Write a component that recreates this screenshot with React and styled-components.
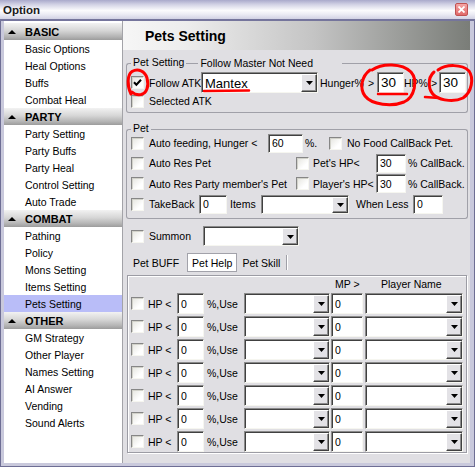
import React from "react";
import styled, { createGlobalStyle, css } from "styled-components";

const GlobalStyle = createGlobalStyle`
  * { box-sizing: border-box; }
  html, body { margin: 0; padding: 0; background: #e0dfe3; }
  body {
    font-family: "Liberation Sans", Arial, sans-serif;
    font-size: 10.5px;
    color: #000;
  }
`;

const sections = [
  { title: "BASIC", items: ["Basic Options", "Heal Options", "Buffs", "Combat Heal"] },
  { title: "PARTY", items: ["Party Setting", "Party Buffs", "Party Heal", "Control Setting", "Auto Trade"] },
  { title: "COMBAT", items: ["Pathing", "Policy", "Mons Setting", "Items Setting", "Pets Setting"] },
  { title: "OTHER", items: ["GM Strategy", "Other Player", "Names Setting", "AI Answer", "Vending", "Sound Alerts"] },
];

const Window = styled.div`
  position: relative;
  width: 475px;
  height: 467px;
  display: flex;
  flex-direction: column;
  overflow: hidden;
`;

const TitleBar = styled.div`
  height: 21px;
  flex: none;
  display: flex;
  align-items: center;
  justify-content: space-between;
  padding: 0 7px 0 3px;
  border-bottom: 2px solid #75759c;
  background: linear-gradient(to bottom, #a9a9cb 0%, #d4d4e6 25%, #fbfbfd 55%, #ececf4 75%, #d2d2e4 100%);
  font-size: 11.5px;
  font-weight: bold;
  color: #1a1a1a;
`;

const CloseBtn = styled.span`
  width: 13px;
  height: 13px;
  display: flex;
  align-items: center;
  justify-content: center;
  background: linear-gradient(#f5a4a4, #e06a6a);
  border: 1px solid #c05252;
  border-radius: 2px;
`;

const Frame = styled.div`
  flex: 1;
  min-height: 0;
  display: flex;
  padding: 0 4px 3px 3px;
  background: #c9c9dc;
  border: 1px solid #6e6e94;
  border-top: none;
`;

const Sidebar = styled.div`
  width: 119px;
  flex: none;
  background: #fff;
  border-right: 1px solid #a3a3a8;
  padding-top: 2px;
`;

const SectionHead = styled.div`
  height: 17px;
  display: flex;
  align-items: center;
  padding-left: 4px;
  font-size: 11px;
  font-weight: bold;
  background: linear-gradient(to bottom, #f2f2f2 0%, #d6d6d6 45%, #b4b4b4 80%, #9c9c9c 100%);
`;

const Arrow = styled.span`
  width: 0;
  height: 0;
  border-left: 4px solid transparent;
  border-right: 4px solid transparent;
  border-bottom: 4px solid #000;
  margin-right: 9px;
`;

const NavItem = styled.div`
  height: 17px;
  display: flex;
  align-items: center;
  padding-left: 21px;
  background: ${(p) => (p.$active ? "#b9bdf8" : "transparent")};
`;

const Main = styled.div`
  flex: 1;
  display: flex;
  flex-direction: column;
  background: #e0dfe3;
`;

const PageHeader = styled.div`
  height: 29px;
  flex: none;
  display: flex;
  align-items: center;
  padding-left: 22px;
  font-size: 14px;
  font-weight: bold;
  background: linear-gradient(to right, #f6f6f6 0%, #ededed 18%, #c4c4c4 55%, #7a7d78 100%);
`;

const Content = styled.div`
  padding: 0 2px 0 3px;
`;

const lineColor = "#a0a0a8";

const Group = styled.div`
  margin-top: ${(p) => p.$mt}px;
`;

const GroupHead = styled.div`
  display: flex;
  height: 10px;
`;

const Caption = styled.span`
  flex: none;
  line-height: 10px;
  padding: 0 2px;
  white-space: nowrap;
  margin-right: ${(p) => p.$mr || 0}px;
  position: relative;
  top: ${(p) => p.$dy || 0}px;
`;

const Edge = styled.span`
  align-self: flex-end;
  height: 4px;
  border-top: 1px solid ${lineColor};
  ${(p) => (p.$w ? css`width: ${p.$w}px; flex: none;` : css`flex: 1;`)}
  ${(p) => p.$left && css`border-left: 1px solid ${lineColor}; border-top-left-radius: 3px;`}
  ${(p) => p.$right && css`border-right: 1px solid ${lineColor}; border-top-right-radius: 3px;`}
`;

const GroupBody = styled.div`
  border: 1px solid ${lineColor};
  border-top: none;
  border-radius: 0 0 3px 3px;
  padding: ${(p) => p.$pad};
`;

const Row = styled.div`
  display: flex;
  align-items: center;
  height: ${(p) => p.$h}px;
  margin-top: ${(p) => p.$mt || 0}px;
  flex: none;
`;

const Txt = styled.span`
  flex: none;
  white-space: nowrap;
  margin-left: ${(p) => p.$ml || 0}px;
  ${(p) => p.$w && css`width: ${p.$w}px;`}
`;

const sunken = css`
  background: #fff;
  border: 1px solid;
  border-color: #8a8a8a #f6f6f0 #f6f6f0 #8a8a8a;
  box-shadow: inset 1px 1px 0 #404040;
`;

const CheckBox = styled.span`
  flex: none;
  width: 13px;
  height: 13px;
  margin-left: ${(p) => p.$ml || 0}px;
  border: 1px solid;
  border-color: #868686 #f6f6f0 #f6f6f0 #868686;
  box-shadow: inset 1px 1px 0 #d2d2ca;
  background: linear-gradient(135deg, #e4e4de, #ffffff 70%);
  display: flex;
  align-items: center;
  justify-content: center;
`;

const Field = styled.div`
  flex: none;
  width: ${(p) => p.$w}px;
  height: ${(p) => p.$h || 19}px;
  margin-left: ${(p) => p.$ml || 0}px;
  ${sunken}
  padding-left: 3px;
  display: flex;
  align-items: center;
  font-size: ${(p) => p.$fs || 10.5}px;
`;

const SelectBox = styled.div`
  flex: none;
  width: ${(p) => p.$w}px;
  height: ${(p) => p.$h || 19}px;
  margin-left: ${(p) => p.$ml || 0}px;
  ${sunken}
  padding: 1px 0 0 3px;
  display: flex;
  align-items: center;
  justify-content: space-between;
  font-size: ${(p) => p.$fs || 10.5}px;
`;

const DropBtn = styled.span`
  width: 16px;
  align-self: stretch;
  flex: none;
  background: #e3e2e6;
  border: 1px solid;
  border-color: #ffffff #404040 #404040 #ffffff;
  box-shadow: inset -1px -1px 0 #8c8c8c;
  display: flex;
  align-items: center;
  justify-content: center;
`;

const TabBar = styled.div`
  display: flex;
  align-items: stretch;
  height: 19px;
  margin-top: 7px;
  padding-left: 2px;
`;

const Tab = styled.span`
  display: flex;
  align-items: center;
  padding: 0 4px;
  margin-left: ${(p) => p.$ml || 0}px;
  border: 1px solid ${(p) => (p.$active ? "#a2a2aa" : "transparent")};
  background: ${(p) => (p.$active ? "#fff" : "transparent")};
`;

const TabSep = styled.span`
  width: 2px;
  margin: 2px 0 2px 1px;
  border-left: 1px solid #a0a0a8;
  border-right: 1px solid #fff;
`;

const Panel = styled.div`
  margin: 3px 1px 0 1px;
  border: 1px solid #9c9ca4;
  box-shadow: inset 1px 1px 0 #fff, 1px 1px 0 #fff;
`;

const RowList = styled.div`
  display: flex;
  flex-direction: column;
  gap: 2px;
  margin-top: 2px;
`;

const Marks = styled.svg`
  position: absolute;
  left: 0;
  top: 0;
  pointer-events: none;
`;

function Check({ checked, ml }) {
  return (
    <CheckBox $ml={ml}>
      {checked && (
        <svg width="9" height="9" viewBox="0 0 9 9">
          <path d="M1 4.2 L3.4 6.8 L8 1.8" fill="none" stroke="#000" strokeWidth="2" />
        </svg>
      )}
    </CheckBox>
  );
}

function Select({ value, w, h, ml, fs }) {
  return (
    <SelectBox $w={w} $h={h} $ml={ml} $fs={fs}>
      <span>{value}</span>
      <DropBtn>
        <svg width="7" height="4" viewBox="0 0 7 4">
          <path d="M0 0 H7 L3.5 4 Z" fill="#000" />
        </svg>
      </DropBtn>
    </SelectBox>
  );
}

function HelpRow() {
  return (
    <Row $h={21}>
      <Check ml={3} />
      <Txt $ml={4} $w={29}>HP &lt;</Txt>
      <Field $w={27} $h={21}>0</Field>
      <Txt $ml={3} $w={37}>%,Use</Txt>
      <Select w={86} h={21} />
      <Field $ml={1} $w={32} $h={21}>0</Field>
      <Select ml={2} w={98} h={21} />
    </Row>
  );
}

export default function App() {
  return (
    <Window>
      <GlobalStyle />
      <TitleBar>
        <span>Option</span>
        <CloseBtn>
          <svg width="7" height="7" viewBox="0 0 7 7">
            <path d="M0.5 0.5 L6.5 6.5 M6.5 0.5 L0.5 6.5" stroke="#fff" strokeWidth="1.8" />
          </svg>
        </CloseBtn>
      </TitleBar>
      <Frame>
        <Sidebar>
          {sections.map((s) => (
            <div key={s.title}>
              <SectionHead>
                <Arrow />
                {s.title}
              </SectionHead>
              {s.items.map((it) => (
                <NavItem key={it} $active={it === "Pets Setting"}>
                  {it}
                </NavItem>
              ))}
            </div>
          ))}
        </Sidebar>
        <Main>
          <PageHeader>Pets Setting</PageHeader>
          <Content>
            <Group $mt={7}>
              <GroupHead>
                <Edge $left $w={5} />
                <Caption>Pet Setting</Caption>
                <Edge $w={12} />
                <Caption $mr={27} $dy={1}>Follow Master Not Need</Caption>
                <Edge $right />
              </GroupHead>
              <GroupBody $pad="5px 0 4px 0">
                <Row $h={21}>
                  <Check checked ml={4} />
                  <Txt $ml={5} $w={52}>Follow ATK</Txt>
                  <Select value="Mantex" w={117} h={21} fs={13} />
                  <Txt $ml={2} $w={48}>Hunger%</Txt>
                  <Txt $w={9}>&gt;</Txt>
                  <Field $w={27} $h={21} $fs={13.5}>30</Field>
                  <Txt $w={27}>HP%</Txt>
                  <Txt $w={8}>&gt;</Txt>
                  <Field $w={27} $h={21} $fs={13.5}>30</Field>
                </Row>
                <Row $h={14} $mt={1}>
                  <Check ml={4} />
                  <Txt $ml={5}>Selected ATK</Txt>
                </Row>
              </GroupBody>
            </Group>

            <Group $mt={10}>
              <GroupHead>
                <Edge $left $w={5} />
                <Caption>Pet</Caption>
                <Edge $right />
              </GroupHead>
              <GroupBody $pad="0 0 4px 0">
                <Row $h={20}>
                  <Check ml={4} />
                  <Txt $ml={5} $w={119}>Auto feeding, Hunger &lt;</Txt>
                  <Field $w={35}>60</Field>
                  <Txt $ml={2} $w={24}>%.</Txt>
                  <Check />
                  <Txt $ml={5}>No Food CallBack Pet.</Txt>
                </Row>
                <Row $h={20}>
                  <Check ml={4} />
                  <Txt $ml={5} $w={147}>Auto Res Pet</Txt>
                  <Check />
                  <Txt $ml={4} $w={63}>Pet's HP&lt;</Txt>
                  <Field $w={30}>30</Field>
                  <Txt $ml={2}>% CallBack.</Txt>
                </Row>
                <Row $h={21}>
                  <Check ml={4} />
                  <Txt $ml={5} $w={147}>Auto Res Party member's Pet</Txt>
                  <Check />
                  <Txt $ml={4} $w={63}>Player's HP&lt;</Txt>
                  <Field $w={30}>30</Field>
                  <Txt $ml={2}>% CallBack.</Txt>
                </Row>
                <Row $h={20}>
                  <Check ml={4} />
                  <Txt $ml={5} $w={50}>TakeBack</Txt>
                  <Field $w={28}>0</Field>
                  <Txt $ml={3} $w={31}>Items</Txt>
                  <Select w={88} />
                  <Txt $ml={7} $w={57}>When Less</Txt>
                  <Field $w={30}>0</Field>
                </Row>
              </GroupBody>
            </Group>

            <Row $h={20} $mt={7}>
              <Check ml={5} />
              <Txt $ml={5} $w={54}>Summon</Txt>
              <Select w={96} h={20} />
            </Row>

            <TabBar>
              <Tab>Pet BUFF</Tab>
              <Tab $ml={3} $active>Pet Help</Tab>
              <Tab>Pet Skill</Tab>
              <TabSep />
            </TabBar>

            <Panel>
              <Row $h={15}>
                <Txt $ml={207} $w={46}>MP &gt;</Txt>
                <Txt>Player Name</Txt>
              </Row>
              <RowList>
                {Array.from({ length: 7 }).map((_, i) => (
                  <HelpRow key={i} />
                ))}
              </RowList>
            </Panel>
          </Content>
        </Main>
      </Frame>

      <Marks width="475" height="467" viewBox="0 0 475 467">
        <g fill="none" stroke="#ff0000" strokeWidth="3" strokeLinecap="round">
          <path d="M131 94 C127 86 127 75 132 71.5 C138 68 145 71 147 78 C149 86 147 93 141 94.5 C137 95 134 94 132 92" />
          <path d="M204 91 L249 90.5" strokeWidth="2.5" />
          <path d="M372 70 C382 63 402 63 411 72 C418 80 415 97 404 102 C392 107 372 105 365 96 C359 88 362 76 370 70" />
          <path d="M378 94 L407 94" strokeWidth="2.5" />
          <path d="M438 70 C446 64 462 64 469 71 C474 78 472 92 463 98 C455 102 442 101 435 96 C428 91 427 78 434 72" />
          <path d="M425 97 L439 98" strokeWidth="2.5" />
        </g>
      </Marks>
    </Window>
  );
}
